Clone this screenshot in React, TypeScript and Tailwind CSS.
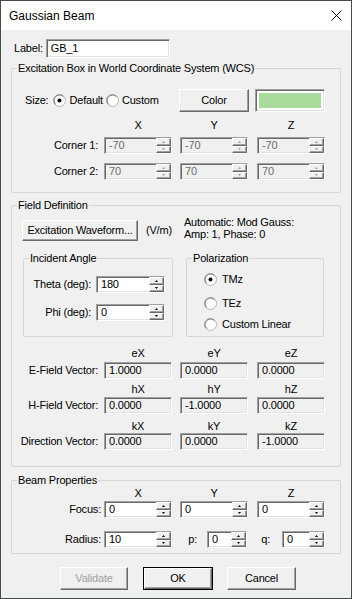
import React from "react";

const sunken =
  "border border-[#a0a0a0] border-r-white border-b-white shadow-[inset_1px_1px_0_#696969,inset_-1px_-1px_0_#e3e3e3]";
const raised =
  "border border-white border-r-[#696969] border-b-[#696969] shadow-[inset_-1px_-1px_0_#a0a0a0]";
const group = "border border-[#d5d5d5] rounded-[2px]";

function Spin({ dim }: { dim?: boolean }) {
  const fill = dim ? "#a0a0a0" : "#000";
  return (
    <div className="flex h-full w-[15px] shrink-0 flex-col">
      <div className={`flex flex-1 items-center justify-center bg-[#f0f0f0] ${raised}`}>
        <svg width="3" height="2" viewBox="0 0 3 2">
          <path d="M1.5 0L3 2H0z" fill={fill} />
        </svg>
      </div>
      <div className={`flex flex-1 items-center justify-center bg-[#f0f0f0] ${raised}`}>
        <svg width="3" height="2" viewBox="0 0 3 2">
          <path d="M0 0h3L1.5 2z" fill={fill} />
        </svg>
      </div>
    </div>
  );
}

function Field({
  value,
  className,
  grey,
  dim,
  spin,
}: {
  value: string;
  className: string;
  grey?: boolean;
  dim?: boolean;
  spin?: boolean;
}) {
  return (
    <div className={`flex h-[17px] shrink-0 ${sunken} ${grey ? "bg-[#f0f0f0]" : "bg-white"} ${className}`}>
      <span className={`flex-1 truncate pl-[4px] leading-[15px] ${dim ? "text-[#6d6d6d]" : "text-black"}`}>
        {value}
      </span>
      {spin && <Spin dim={dim} />}
    </div>
  );
}

function Radio({ checked }: { checked?: boolean }) {
  return (
    <svg width="13" height="13" viewBox="0 0 13 13" className="shrink-0">
      <circle cx="6.5" cy="6.5" r="6" fill="#fff" stroke="#b4b4b4" />
      <path d="M2.6 10.4A5.5 5.5 0 0 1 10.4 2.6" fill="none" stroke="#6e6e6e" />
      {checked && <circle cx="6.5" cy="6.5" r="2" fill="#000" />}
    </svg>
  );
}

function Button({ label, className, dim, def }: { label: string; className: string; dim?: boolean; def?: boolean }) {
  return (
    <div className={`${def ? "border border-black" : ""} shrink-0 ${className}`}>
      <div
        className={`flex h-full w-full items-center justify-center bg-[#f0f0f0] ${raised} ${
          dim ? "text-[#a0a0a0]" : "text-black"
        }`}
      >
        {label}
      </div>
    </div>
  );
}

function Head({ a, b, c, w }: { a: string; b: string; c: string; w: string }) {
  return (
    <div className="flex leading-[13px]">
      <span className={w} />
      <span className="w-[68px] text-center">{a}</span>
      <span className="ml-[8px] w-[68px] text-center">{b}</span>
      <span className="ml-[9px] w-[68px] text-center">{c}</span>
    </div>
  );
}

function Row({
  label,
  values,
  grey,
  dim,
  spin,
  labelW = "w-[86px]",
  gap = "ml-[6px]",
}: {
  label: string;
  values: string[];
  grey?: boolean;
  dim?: boolean;
  spin?: boolean;
  labelW?: string;
  gap?: string;
}) {
  return (
    <div className="flex items-center">
      <span className={`${labelW} text-right`}>{label}</span>
      <Field value={values[0]} className={`${gap} w-[68px]`} grey={grey} dim={dim} spin={spin} />
      <Field value={values[1]} className="ml-[8px] w-[68px]" grey={grey} dim={dim} spin={spin} />
      <Field value={values[2]} className="ml-[9px] w-[68px]" grey={grey} dim={dim} spin={spin} />
    </div>
  );
}

export default function App() {
  return (
    <div className="flex h-[599px] w-[352px] flex-col border border-[#434d45] bg-[#f0f0f0] font-['Liberation_Sans',Arial,sans-serif] text-[11px] tracking-[-0.2px] text-black">
      {/* title bar */}
      <div className="flex h-[29px] shrink-0 items-center justify-between bg-white pl-[8px] pr-[9px] text-[12px] tracking-normal">
        <span>Gaussian Beam</span>
        <svg width="11" height="11" viewBox="0 0 11 11" className="mb-px">
          <path d="M0.5 0.5l10 10M10.5 0.5l-10 10" stroke="#000" strokeWidth="1" />
        </svg>
      </div>

      {/* label */}
      <div className="ml-[13px] mt-[9px] flex items-center">
        <span>Label:</span>
        <div className={`ml-[3px] flex h-[19px] w-[124px] items-center bg-white pl-[4px] ${sunken}`}>GB_1</div>
      </div>

      {/* excitation box */}
      <fieldset className={`mx-[10px] mt-[4px] pb-[12px] ${group}`}>
        <legend className="ml-[5px] px-px leading-[13px]">Excitation Box in World Coordinate System (WCS)</legend>
        <div className="mt-[14px] flex h-[23px] items-center">
          <div className="flex w-[167px] items-center pl-[13px]">
            <span>Size:</span>
            <span className="ml-[5px]">
              <Radio checked />
            </span>
            <span className="ml-[3px]">Default</span>
            <span className="ml-[3px]">
              <Radio />
            </span>
            <span className="ml-[3px]">Custom</span>
          </div>
          <Button label="Color" className="h-[23px] w-[70px]" />
          <div className={`ml-[6px] h-[23px] w-[70px] bg-white p-[3px] ${sunken}`}>
            <div className="h-full w-full bg-[#a9dc9c]" />
          </div>
        </div>
        <div className="mt-[7px]">
          <Head a="X" b="Y" c="Z" w="w-[92px]" />
        </div>
        <div className="mt-[5px]">
          <Row label="Corner 1:" values={["-70", "-70", "-70"]} grey dim spin />
        </div>
        <div className="mt-[9px]">
          <Row label="Corner 2:" values={["70", "70", "70"]} grey dim spin />
        </div>
      </fieldset>

      {/* field definition */}
      <fieldset className={`mx-[10px] mt-[6px] pb-[16px] ${group}`}>
        <legend className="ml-[5px] px-px leading-[13px]">Field Definition</legend>
        <div className="mt-[4px] flex items-start pl-[10px]">
          <Button label="Excitation Waveform..." className="mt-[4px] h-[21px] w-[116px]" />
          <span className="ml-[8px] mt-[8px] leading-[13px]">(V/m)</span>
          <div className="ml-[12px] leading-[12px]">
            <div>Automatic: Mod Gauss:</div>
            <div>Amp: 1, Phase: 0</div>
          </div>
        </div>

        <div className="mt-[11px] flex pl-[11px]">
          <fieldset className={`w-[150px] pb-[15px] ${group}`}>
            <legend className="ml-[5px] px-px leading-[13px]">Incident Angle</legend>
            <div className="mt-[11px] flex items-center">
              <span className="w-[67px] text-right">Theta (deg):</span>
              <Field value="180" className="ml-[5px] w-[69px]" spin />
            </div>
            <div className="mt-[11px] flex items-center">
              <span className="w-[67px] text-right">Phi (deg):</span>
              <Field value="0" className="ml-[5px] w-[69px]" spin />
            </div>
          </fieldset>
          <fieldset className={`ml-[13px] w-[138px] ${group}`}>
            <legend className="ml-[5px] px-px leading-[13px]">Polarization</legend>
            <div className="mt-[8px] flex items-center pl-[17px] leading-[13px]">
              <Radio checked />
              <span className="ml-[5px]">TMz</span>
            </div>
            <div className="mt-[11px] flex items-center pl-[17px] leading-[13px]">
              <Radio />
              <span className="ml-[5px]">TEz</span>
            </div>
            <div className="mt-[8px] flex items-center pl-[17px] leading-[13px]">
              <Radio />
              <span className="ml-[5px]">Custom Linear</span>
            </div>
          </fieldset>
        </div>

        <div className="mt-[10px]">
          <Head a="eX" b="eY" c="eZ" w="w-[92px]" />
        </div>
        <div className="mt-[2px]">
          <Row label="E-Field Vector:" values={["1.0000", "0.0000", "0.0000"]} grey />
        </div>
        <div className="mt-[4px]">
          <Head a="hX" b="hY" c="hZ" w="w-[92px]" />
        </div>
        <div className="mt-px">
          <Row label="H-Field Vector:" values={["0.0000", "-1.0000", "0.0000"]} grey />
        </div>
        <div className="mt-[6px]">
          <Head a="kX" b="kY" c="kZ" w="w-[92px]" />
        </div>
        <div>
          <Row label="Direction Vector:" values={["0.0000", "0.0000", "-1.0000"]} grey />
        </div>
      </fieldset>

      {/* beam properties */}
      <fieldset className={`mx-[10px] mt-[7px] pb-[5px] ${group}`}>
        <legend className="ml-[5px] px-px leading-[13px]">Beam Properties</legend>
        <Head a="X" b="Y" c="Z" w="w-[92px]" />
        <div className="mt-[1px]">
          <Row label="Focus:" values={["0", "0", "0"]} spin labelW="w-[89px]" gap="ml-[3px]" />
        </div>
        <div className="mt-[13px] flex items-center">
          <span className="w-[89px] text-right">Radius:</span>
          <Field value="10" className="ml-[3px] w-[68px]" spin />
          <span className="w-[25px] text-right">p:</span>
          <Field value="0" className="ml-[10px] w-[40px]" spin />
          <span className="w-[23px] text-right">q:</span>
          <Field value="0" className="ml-[12px] w-[43px]" spin />
        </div>
      </fieldset>

      {/* buttons */}
      <div className="ml-[59px] mt-[13px] flex">
        <Button label="Validate" className="h-[23px] w-[68px]" dim />
        <Button label="OK" className="ml-[15px] h-[23px] w-[70px]" def />
        <Button label="Cancel" className="ml-[14px] h-[23px] w-[69px]" />
      </div>
    </div>
  );
}
